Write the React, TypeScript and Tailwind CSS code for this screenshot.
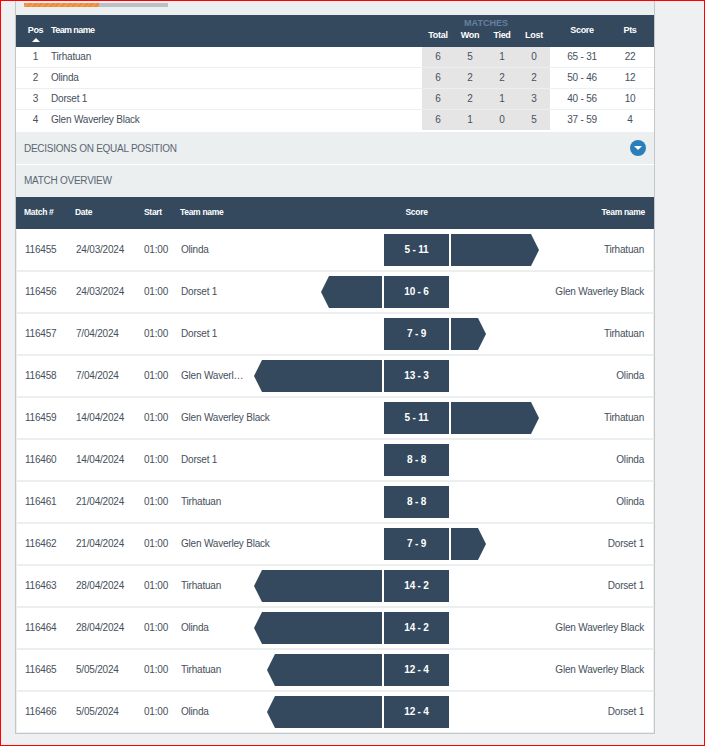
import React from 'react';

const ladder = [
  { pos: 1, team: 'Tirhatuan', total: 6, won: 5, tied: 1, lost: 0, score: '65 - 31', pts: 22 },
  { pos: 2, team: 'Olinda', total: 6, won: 2, tied: 2, lost: 2, score: '50 - 46', pts: 12 },
  { pos: 3, team: 'Dorset 1', total: 6, won: 2, tied: 1, lost: 3, score: '40 - 56', pts: 10 },
  { pos: 4, team: 'Glen Waverley Black', total: 6, won: 1, tied: 0, lost: 5, score: '37 - 59', pts: 4 },
];

const matches = [
  { id: 116455, date: '24/03/2024', home: 'Olinda', score: '5 - 11', away: 'Tirhatuan', side: 'right', bar: 'w-[88px]' },
  { id: 116456, date: '24/03/2024', home: 'Dorset 1', score: '10 - 6', away: 'Glen Waverley Black', side: 'left', bar: 'w-[61px]' },
  { id: 116457, date: '7/04/2024', home: 'Dorset 1', score: '7 - 9', away: 'Tirhatuan', side: 'right', bar: 'w-[35px]' },
  { id: 116458, date: '7/04/2024', home: 'Glen Waverley Black', score: '13 - 3', away: 'Olinda', side: 'left', bar: 'w-[128px]' },
  { id: 116459, date: '14/04/2024', home: 'Glen Waverley Black', score: '5 - 11', away: 'Tirhatuan', side: 'right', bar: 'w-[88px]' },
  { id: 116460, date: '14/04/2024', home: 'Dorset 1', score: '8 - 8', away: 'Olinda', side: '', bar: '' },
  { id: 116461, date: '21/04/2024', home: 'Tirhatuan', score: '8 - 8', away: 'Olinda', side: '', bar: '' },
  { id: 116462, date: '21/04/2024', home: 'Glen Waverley Black', score: '7 - 9', away: 'Dorset 1', side: 'right', bar: 'w-[35px]' },
  { id: 116463, date: '28/04/2024', home: 'Tirhatuan', score: '14 - 2', away: 'Dorset 1', side: 'left', bar: 'w-[128px]' },
  { id: 116464, date: '28/04/2024', home: 'Olinda', score: '14 - 2', away: 'Glen Waverley Black', side: 'left', bar: 'w-[128px]' },
  { id: 116465, date: '5/05/2024', home: 'Tirhatuan', score: '12 - 4', away: 'Glen Waverley Black', side: 'left', bar: 'w-[115px]' },
  { id: 116466, date: '5/05/2024', home: 'Olinda', score: '12 - 4', away: 'Dorset 1', side: 'left', bar: 'w-[115px]' },
];

const LadderTable: React.FC = () => (
  <div className="bg-white pb-[2px]">
    <div className="flex h-[32px] bg-[#34495e] text-[9px] font-bold tracking-[-0.3px] text-white">
      <div className="w-[35px] flex-none pl-[4px] pt-[10px] text-center leading-[10px]">
        Pos
        <div className="mx-auto mt-[3px] h-0 w-0 border-x-[4px] border-b-[4px] border-x-transparent border-b-white" />
      </div>
      <div className="flex-1 pt-[10px] leading-[10px] tracking-[-0.6px]">Team name</div>
      <div className="w-[128px] flex-none pt-[3px] text-center leading-[10px]">
        <div className="tracking-[0px] text-[#66809f]">MATCHES</div>
        <div className="mt-[2px] grid grid-cols-4">
          <span>Total</span>
          <span>Won</span>
          <span>Tied</span>
          <span>Lost</span>
        </div>
      </div>
      <div className="w-[64px] flex-none pt-[10px] text-center leading-[10px]">Score</div>
      <div className="w-[40px] flex-none pr-[8px] pt-[10px] text-center leading-[10px]">Pts</div>
    </div>
    {ladder.map((row) => (
      <div key={row.pos} className="flex h-[21px] border-b border-[#ecefef] text-[10px] leading-[20px] tracking-[-0.2px] text-[#46505c] last:h-[20px] last:border-b-0">
        <div className="w-[35px] flex-none pl-[4px] text-center">{row.pos}</div>
        <div className="flex-1">{row.team}</div>
        <div className="grid w-[128px] flex-none grid-cols-4 bg-[#e5e5e5] text-center">
          <span>{row.total}</span>
          <span>{row.won}</span>
          <span>{row.tied}</span>
          <span>{row.lost}</span>
        </div>
        <div className="w-[64px] flex-none text-center">{row.score}</div>
        <div className="w-[40px] flex-none pr-[8px] text-center">{row.pts}</div>
      </div>
    ))}
  </div>
);

const MatchTable: React.FC = () => (
  <div>
    <div className="flex h-[32px] items-center bg-[#34495e] pb-[2px] text-[8.5px] font-bold tracking-[-0.3px] text-white">
      <div className="w-[59px] flex-none pl-[8px]">Match #</div>
      <div className="w-[69px] flex-none">Date</div>
      <div className="w-[36px] flex-none">Start</div>
      <div className="w-[204px] flex-none">Team name</div>
      <div className="w-[65px] flex-none text-center">Score</div>
      <div className="flex-1 pr-[9px] text-right">Team name</div>
    </div>
    <div className="flex flex-col gap-[2px] border-t border-white bg-[#ecefef] px-px">
      {matches.map((m) => (
        <div key={m.id} className="flex h-[40px] items-start bg-white pt-[4px] text-[10px] leading-[32px] tracking-[-0.2px] text-[#46505c]">
          <div className="w-[59px] flex-none pl-[8px]">{m.id}</div>
          <div className="w-[68px] flex-none">{m.date}</div>
          <div className="w-[37px] flex-none">01:00</div>
          <div className="flex w-[201px] flex-none justify-end">
            <div className="min-w-0 flex-1 truncate pr-[9px]">{m.home}</div>
            {m.side === 'left' && (
              <div className={`${m.bar} h-[32px] flex-none bg-[#34495e] [clip-path:polygon(8px_0,100%_0,100%_100%,8px_100%,0_50%)]`} />
            )}
          </div>
          <div className="ml-[2px] h-[32px] w-[65px] flex-none bg-[#34495e] text-center font-bold text-white">{m.score}</div>
          <div className="ml-[2px] flex-1">
            {m.side === 'right' && (
              <div className={`${m.bar} h-[32px] bg-[#34495e] [clip-path:polygon(0_0,calc(100%-8px)_0,100%_50%,calc(100%-8px)_100%,0_100%)]`} />
            )}
          </div>
          <div className="flex-none pr-[9px] text-right">{m.away}</div>
        </div>
      ))}
    </div>
  </div>
);

export default function App() {
  return (
    <div className="h-[746px] w-[705px] overflow-hidden border border-[#ff0000] bg-[#eff0f2] font-['Liberation_Sans',Arial,sans-serif]">
      <div className="relative ml-[14px] h-[733px] w-[640px] border-x border-b border-[#c3c6ca] bg-[#ecefef]">
        <div className="flex h-[14px] items-start pl-[8px] pt-[2px]">
          <div className="flex h-[4px] w-[144px] bg-[#bcbfc5]">
            <div className="h-full w-[75px] bg-[repeating-linear-gradient(135deg,#f08a34_0,#f08a34_2px,#f0995a_2px,#f0995a_4px)]" />
          </div>
        </div>
        <LadderTable />
        <div className="flex h-[32px] items-center justify-between pl-[8px] pr-[8px] text-[10px] tracking-[-0.26px] text-[#5b6673]">
          <span>DECISIONS ON EQUAL POSITION</span>
          <span className="flex h-[16px] w-[16px] items-center justify-center rounded-full bg-[#2a7fba]">
            <span className="h-0 w-0 border-x-[4px] border-t-[4px] border-x-transparent border-t-white" />
          </span>
        </div>
        <div className="flex h-[33px] items-center border-t border-white pb-[1px] pl-[8px] text-[10px] tracking-[-0.26px] text-[#5b6673]">MATCH OVERVIEW</div>
        <MatchTable />
      </div>
    </div>
  );
}
